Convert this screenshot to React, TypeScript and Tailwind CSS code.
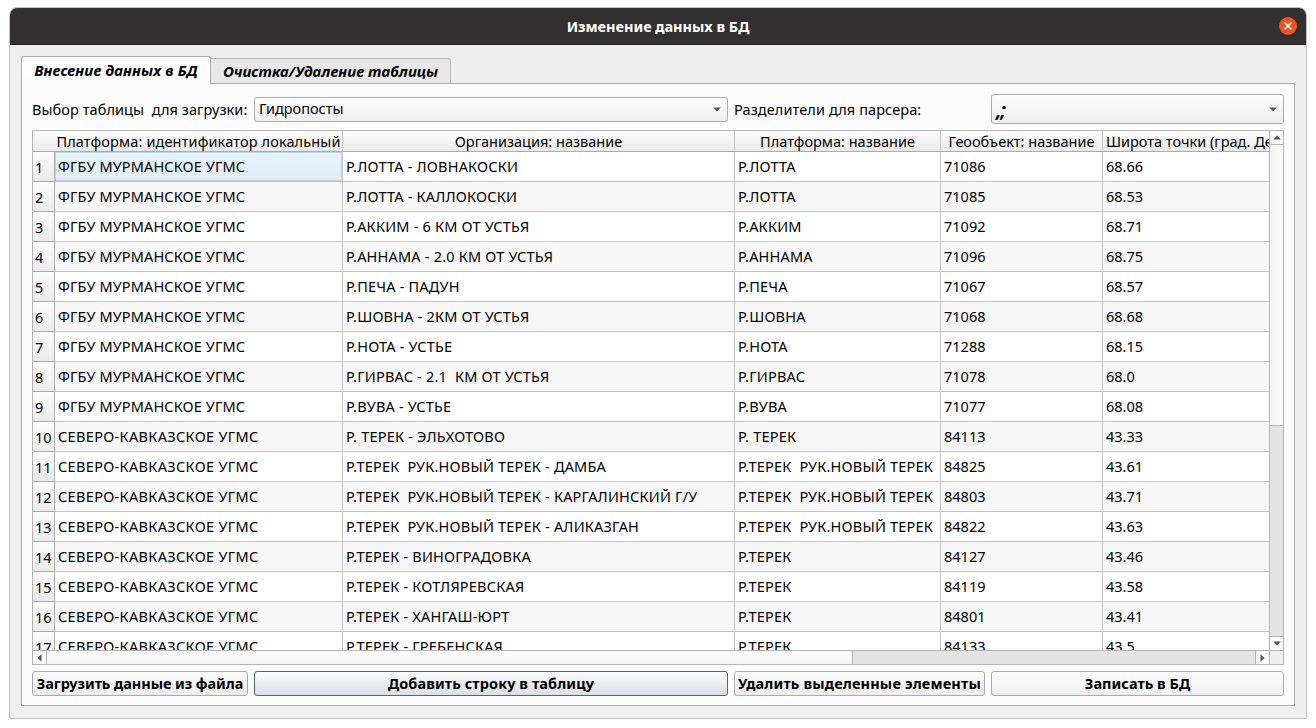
import type { ReactNode } from "react";

const MUR = "ФГБУ МУРМАНСКОЕ УГМС";
const SEV = "СЕВЕРО-КАВКАЗСКОЕ УГМС";

const columns = [
  "Платформа: идентификатор локальный",
  "Организация: название",
  "Платформа: название",
  "Геообъект: название",
];

const rows: string[][] = [
  [MUR, "Р.ЛОТТА - ЛОВНАКОСКИ", "Р.ЛОТТА", "71086", "68.66"],
  [MUR, "Р.ЛОТТА - КАЛЛОКОСКИ", "Р.ЛОТТА", "71085", "68.53"],
  [MUR, "Р.АККИМ - 6 КМ ОТ УСТЬЯ", "Р.АККИМ", "71092", "68.71"],
  [MUR, "Р.АННАМА - 2.0 КМ ОТ УСТЬЯ", "Р.АННАМА", "71096", "68.75"],
  [MUR, "Р.ПЕЧА - ПАДУН", "Р.ПЕЧА", "71067", "68.57"],
  [MUR, "Р.ШОВНА - 2КМ ОТ УСТЬЯ", "Р.ШОВНА", "71068", "68.68"],
  [MUR, "Р.НОТА - УСТЬЕ", "Р.НОТА", "71288", "68.15"],
  [MUR, "Р.ГИРВАС - 2.1  КМ ОТ УСТЬЯ", "Р.ГИРВАС", "71078", "68.0"],
  [MUR, "Р.ВУВА - УСТЬЕ", "Р.ВУВА", "71077", "68.08"],
  [SEV, "Р. ТЕРЕК - ЭЛЬХОТОВО", "Р. ТЕРЕК", "84113", "43.33"],
  [SEV, "Р.ТЕРЕК  РУК.НОВЫЙ ТЕРЕК - ДАМБА", "Р.ТЕРЕК  РУК.НОВЫЙ ТЕРЕК", "84825", "43.61"],
  [SEV, "Р.ТЕРЕК  РУК.НОВЫЙ ТЕРЕК - КАРГАЛИНСКИЙ Г/У", "Р.ТЕРЕК  РУК.НОВЫЙ ТЕРЕК", "84803", "43.71"],
  [SEV, "Р.ТЕРЕК  РУК.НОВЫЙ ТЕРЕК - АЛИКАЗГАН", "Р.ТЕРЕК  РУК.НОВЫЙ ТЕРЕК", "84822", "43.63"],
  [SEV, "Р.ТЕРЕК - ВИНОГРАДОВКА", "Р.ТЕРЕК", "84127", "43.46"],
  [SEV, "Р.ТЕРЕК - КОТЛЯРЕВСКАЯ", "Р.ТЕРЕК", "84119", "43.58"],
  [SEV, "Р.ТЕРЕК - ХАНГАШ-ЮРТ", "Р.ТЕРЕК", "84801", "43.41"],
  [SEV, "Р.ТЕРЕК - ГРЕБЕНСКАЯ", "Р.ТЕРЕК", "84133", "43.5"],
];

const GRID = "grid grid-cols-[22px_288px_392px_206px_162px_166px]";
const FACE = "bg-linear-to-b from-[#fdfdfd] to-[#eeeeee]";

function Arrow({ dir }: { dir: "up" | "down" | "left" | "right" }) {
  const d = {
    up: "M0.3 4.5 L4 0.5 L7.7 4.5 Z",
    down: "M0.3 0.5 L7.7 0.5 L4 4.5 Z",
    left: "M4.5 0.3 L0.5 4 L4.5 7.7 Z",
    right: "M0.5 0.3 L4.5 4 L0.5 7.7 Z",
  }[dir];
  const flat = dir === "up" || dir === "down";
  return (
    <svg width={flat ? 8 : 5} height={flat ? 5 : 8} className="shrink-0" fill="#555555">
      <path d={d} />
    </svg>
  );
}

function Combo({ className, children }: { className: string; children: ReactNode }) {
  return (
    <div className={`flex items-center justify-between rounded-[3px] border border-[#ababab] pl-1 pr-[6px] ${FACE} ${className}`}>
      {children}
      <Arrow dir="down" />
    </div>
  );
}

function Button({ primary, className, children }: { primary?: boolean; className: string; children: string }) {
  const look = primary
    ? "border-[#2f6f9a] bg-linear-to-b from-[#fafbfc] to-[#d8e0e8]"
    : `border-[#ababab] ${FACE}`;
  return (
    <button className={`flex h-[25px] items-center justify-center whitespace-nowrap rounded-[3px] border pb-px font-bold ${look} ${className}`}>
      {children}
    </button>
  );
}

function Table() {
  const tracking = (cell: string, c: number) => {
    if (cell === MUR) return "tracking-[0.13px]";
    if (cell === SEV) return "tracking-[0.33px]";
    return c < 3 ? "tracking-[0.2px]" : "tracking-normal";
  };
  return (
    <div className="grid h-[535px] grid-cols-[1236px_14px] grid-rows-[519px_14px] border border-[#b4b4b4] bg-white">
      <div className="overflow-hidden">
        <div className={`${GRID} h-[21px] border-b border-[#ababab] bg-linear-to-b from-[#fcfcfc] to-[#ebebeb]`}>
          <div />
          {columns.map((name, i) => (
            <div
              key={name}
              className={`flex items-center justify-center whitespace-nowrap border-r border-[#c4c4c4] pb-px ${i === 0 ? "tracking-[0.13px]" : ""}`}
            >
              {name}
            </div>
          ))}
          <div className="flex items-center whitespace-nowrap pb-px pl-[3px]">Широта точки (град. Десятичные)</div>
        </div>
        {rows.map((row, i) => (
          <div key={i} className={`${GRID} h-[30px] ${i % 2 ? "bg-[#f7f7f7]" : "bg-white"}`}>
            <div className="flex items-center border-b border-r border-[#ababab] bg-linear-to-b from-[#fcfcfc] to-[#ebebeb] pl-[2px]">
              {i + 1}
            </div>
            {row.map((cell, c) => (
              <div
                key={c}
                className={`flex items-center whitespace-pre border-b border-[#c4c4c4] pb-0.5 pl-[3px] ${c < 4 ? "border-r" : ""} ${
                  i === 0 && c === 0
                    ? "bg-linear-to-b from-[#e7f4fd] to-[#e2ecf4] shadow-[inset_0_0_0_1px_#b9d2e4]"
                    : ""
                } ${tracking(cell, c)}`}
              >
                {cell}
              </div>
            ))}
          </div>
        ))}
      </div>
      <div className="flex flex-col border-l border-[#b4b4b4]">
        <div className="flex h-[14px] items-center justify-center border-b border-[#b4b4b4] bg-[#fbfbfb]">
          <Arrow dir="up" />
        </div>
        <div className="h-[281px] border-b border-[#b4b4b4] bg-linear-to-r from-[#f2f2f2] to-[#fdfdfd]" />
        <div className="h-[211px] border-b border-[#b4b4b4] bg-[#e4e4e4]" />
        <div className="flex grow items-center justify-center bg-[#fbfbfb]">
          <Arrow dir="down" />
        </div>
      </div>
      <div className="flex border-t border-[#b4b4b4]">
        <div className="flex w-[14px] items-center justify-center border-r border-[#b4b4b4] bg-[#fbfbfb]">
          <Arrow dir="left" />
        </div>
        <div className="w-[806px] border-r border-[#b4b4b4] bg-linear-to-b from-[#fdfdfd] to-[#f2f2f2]" />
        <div className="w-[403px] border-r border-[#b4b4b4] bg-[#e4e4e4]" />
        <div className="flex grow items-center justify-center bg-[#fbfbfb]">
          <Arrow dir="right" />
        </div>
      </div>
      <div className="border-l border-t border-[#b4b4b4] bg-[#efefef]" />
    </div>
  );
}

export default function App() {
  return (
    <div className="h-[728px] w-[1316px] overflow-hidden bg-white pl-[9px] pt-[7px] font-['Noto_Sans',sans-serif] text-[14.5px] leading-[18px] text-black">
      <div className="flex h-[712px] w-[1298px] flex-col overflow-hidden rounded-t-lg border border-[#c0c0c0] bg-[#efefef]">
        <header className="grid h-[37px] shrink-0 grid-cols-[40px_1fr_40px] items-center border-b border-[#1f1e1e] bg-[#333031]">
          <div />
          <h1 className="text-center font-bold tracking-[-0.04px] text-white">Изменение данных в БД</h1>
          <button className="ml-[13px] flex size-[18px] items-center justify-center rounded-full bg-[#e95420]">
            <svg width="8" height="8" stroke="white" strokeWidth="1.5">
              <path d="M0.5 0.5 L7.5 7.5 M7.5 0.5 L0.5 7.5" />
            </svg>
          </button>
        </header>
        <main className="flex flex-col pl-[11px] pt-[11px]">
          <nav className="flex h-[27px] items-end text-[15px] font-bold italic">
            <div className="relative z-10 -mb-px flex h-7 w-[190px] items-center justify-center rounded-t-[3px] border border-b-0 border-[#ababab] bg-linear-to-b from-white to-[#fcfcfc] pb-0.5">
              <span className="tracking-[0.16px]">Внесение данных в БД</span>
            </div>
            <div className="flex h-[25px] w-[240px] items-center justify-center rounded-tr-[3px] border border-b-0 border-l-0 border-[#b9b9b9] bg-[#e8e8e8] pb-px">
              <span className="tracking-[0.04px]">Очистка/Удаление таблицы</span>
            </div>
          </nav>
          <section className="flex h-[623px] w-[1274px] flex-col gap-1.5 border border-[#ababab] bg-[#fcfcfc] px-2.5 pt-2.5">
            <div className="grid h-[30px] grid-cols-[216px_474px_251px_293px] items-center gap-x-1.5">
              <label className="whitespace-pre tracking-[0.07px]">Выбор таблицы  для загрузки:</label>
              <Combo className="h-[25px]">
                <span className="pb-0.5">Гидропосты</span>
              </Combo>
              <label className="tracking-[0.1px]">Разделители для парсера:</label>
              <Combo className="h-[30px]">
                <span className="pt-0.5 text-[19px] font-bold italic tracking-[-1px]">,;</span>
              </Combo>
            </div>
            <Table />
            <div className="grid grid-cols-[216px_474px_251px_293px] gap-x-1.5">
              <Button className="tracking-[-0.08px]">Загрузить данные из файла</Button>
              <Button primary className="tracking-[0.08px]">Добавить строку в таблицу</Button>
              <Button className="tracking-[0.14px]">Удалить выделенные элементы</Button>
              <Button className="tracking-normal">Записать в БД</Button>
            </div>
          </section>
        </main>
      </div>
    </div>
  );
}
